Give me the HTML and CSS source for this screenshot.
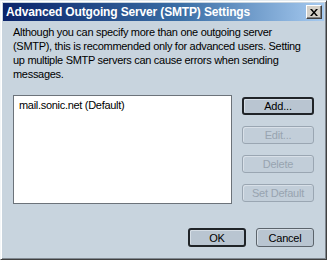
FILE: index.html
```html
<!DOCTYPE html>
<html lang="en">
<head>
  <meta charset="UTF-8" />
  <title>Advanced Outgoing Server (SMTP) Settings</title>
  <link rel="stylesheet" href="styles.css">
</head>
<body>

  <div class="window">
    <!-- Title Bar -->
    <div class="title-bar">
      <span class="title-text">Advanced Outgoing Server (SMTP) Settings</span>
      <span class="close-btn">
        <svg width="8" height="7" viewBox="0 0 8 7">
          <path d="M0 0h2l2 2.5L6 0h2L5 3.5 8 7H6L4 4.5 2 7H0l3-3.5z" fill="#000"/>
        </svg>
      </span>
    </div>

    <div class="dialog-body">
      <p class="intro">Although you can specify more than one outgoing server (SMTP), this is recommended only for advanced users. Setting up multiple SMTP servers can cause errors when sending messages.</p>

      <div class="server-row">
        <div class="server-list">
          <div class="server-item">mail.sonic.net (Default)</div>
        </div>
        <div class="server-buttons">
          <button class="btn default">Add...</button>
          <button class="btn" disabled>Edit...</button>
          <button class="btn" disabled>Delete</button>
          <button class="btn" disabled>Set Default</button>
        </div>
      </div>

      <div class="dialog-footer">
        <button class="btn default ok">OK</button>
        <button class="btn cancel">Cancel</button>
      </div>
    </div>
  </div>

</body>
</html>
```

FILE: styles.css
```css
/* Basic Reset & Font */
* {
  box-sizing: border-box;
  margin: 0;
  padding: 0;
}

body {
  font-family: 'Liberation Sans', Arial, sans-serif;
  font-size: 11px;
  letter-spacing: -0.3px;
  color: #000;
  background: #c8d4de;
  width: 327px;
  height: 260px;
  overflow: hidden;
}

/* Window Frame */
.window {
  width: 327px;
  height: 260px;
  background: #c8d4de;
  border-top: 1px solid #e4ebf0;
  border-left: 1px solid #f4f7f9;
  border-right: 1px solid #404040;
  border-bottom: 1px solid #404040;
  box-shadow: inset 1px 1px 0 #ffffff, inset -1px -1px 0 #808890;
  padding: 2px;
  display: flex;
  flex-direction: column;
}

/* Title Bar */
.title-bar {
  height: 18px;
  background: linear-gradient(90deg, #0a246a 0%, #3a6ea5 55%, #a6caf0 100%);
  display: flex;
  align-items: center;
  justify-content: space-between;
  padding: 0 2px 0 3px;
}

.title-text {
  color: #fff;
  font-weight: bold;
  font-size: 12px;
  letter-spacing: -0.15px;
  white-space: nowrap;
}

.close-btn {
  width: 16px;
  height: 14px;
  background: #d4d0c8;
  border-top: 1px solid #fff;
  border-left: 1px solid #fff;
  border-right: 1px solid #404040;
  border-bottom: 1px solid #404040;
  box-shadow: inset -1px -1px 0 #808080;
  display: flex;
  align-items: center;
  justify-content: center;
}

/* Dialog Body */
.dialog-body {
  flex: 1;
  padding: 4px 9px 0 10px;
  display: flex;
  flex-direction: column;
}

.intro {
  width: 300px;
  line-height: 14px;
  margin-bottom: 14px;
}

.server-row {
  display: flex;
  gap: 10px;
}

/* Server List */
.server-list {
  width: 219px;
  height: 109px;
  background: #fff;
  border: 1px solid #6c737a;
  padding: 2px 5px;
}

.server-item {
  line-height: 14px;
}

/* Buttons */
.server-buttons {
  display: flex;
  flex-direction: column;
  gap: 11px;
  padding-top: 2px;
}

.btn {
  font-family: inherit;
  font-size: 11px;
  letter-spacing: -0.2px;
  width: 72px;
  height: 18px;
  background: #b9c5d1;
  border: 1px solid #5c646c;
  border-radius: 3px;
  color: #000;
  box-shadow: inset 1px 1px 0 #d6dee6;
}

.btn.default {
  border: 2px solid #202428;
}

.btn:disabled {
  border-color: #9aa6b2;
  color: #98a4b0;
  background: #c2ced9;
  box-shadow: inset 1px 1px 0 #d8e0e8;
}

.dialog-footer {
  display: flex;
  justify-content: flex-end;
  gap: 10px;
  margin-top: 24px;
  padding-right: 1px;
}

.dialog-footer .btn {
  width: 58px;
  height: 19px;
}
```
